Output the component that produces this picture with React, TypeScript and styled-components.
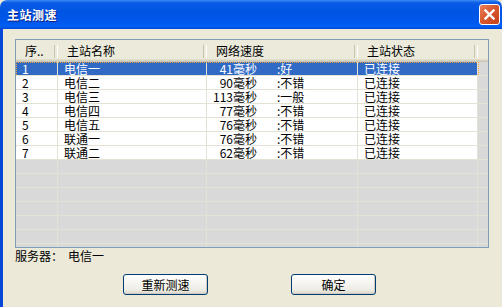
import React from 'react';
import styled, { createGlobalStyle } from 'styled-components';

const GlobalStyle = createGlobalStyle`
    html, body {
        margin: 0;
        padding: 0;
        background: #ece9d8;
    }
    * {
        box-sizing: border-box;
    }
`;

const FONT = `"Noto Sans CJK SC", "Liberation Sans", sans-serif`;
const COLS = '42px 149px 151px 120px 10px';

const Window = styled.div`
    width: 502px;
    height: 307px;
    display: flex;
    flex-direction: column;
    background: #ece9d8;
    font-family: ${FONT};
    font-size: 12px;
    color: #000;
    overflow: hidden;
`;

const TitleBar = styled.div`
    height: 29px;
    flex: none;
    display: flex;
    align-items: center;
    justify-content: space-between;
    padding-left: 7px;
    border-radius: 7px 7px 0 0;
    background: linear-gradient(
        to bottom,
        #3d8cf5 0%,
        #0a5ae6 10%,
        #0054e3 45%,
        #0058ee 80%,
        #0062f5 90%,
        #0048d8 100%
    );
`;

const Title = styled.span`
    color: #fff;
    font-weight: bold;
    font-size: 12px;
    letter-spacing: 0.5px;
    text-shadow: 1px 1px 0 #0a1e80;
`;

const CloseButton = styled.div`
    width: 21px;
    height: 21px;
    margin-right: 2px;
    border: 1px solid #fff;
    border-radius: 3px;
    background: linear-gradient(135deg, #ea7f5a 0%, #d85a30 45%, #c43f18 100%);
    display: flex;
    align-items: center;
    justify-content: center;
`;

const Frame = styled.div`
    flex: 1;
    display: flex;
    border-left: 3px solid #0848d6;
`;

const Body = styled.div`
    flex: 1;
    display: flex;
    flex-direction: column;
    padding: 10px 0 0 12px;
`;

const ListBox = styled.div`
    width: 474px;
    height: 209px;
    border: 1px solid #7f9db9;
    background: #d9d9d9;
    overflow: hidden;
    display: flex;
    flex-direction: column;
`;

const Header = styled.div`
    height: 22px;
    flex: none;
    display: grid;
    grid-template-columns: ${COLS};
    background: linear-gradient(
        to bottom,
        #ebeadb 0,
        #ebeadb 19px,
        #e2decd 19px,
        #e2decd 20px,
        #d6d2c2 20px,
        #d6d2c2 21px,
        #cbc7b8 21px
    );
`;

const HeaderCell = styled.div<{ $sep?: boolean }>`
    position: relative;
    padding-left: 9px;
    line-height: 21px;
    white-space: nowrap;
    &::after {
        content: '';
        display: ${p => (p.$sep ? 'block' : 'none')};
        position: absolute;
        right: 0;
        top: 5px;
        height: 13px;
        width: 2px;
        border-left: 1px solid #c7c5b2;
        border-right: 1px solid #fff;
    }
`;

const Row = styled.div<{ $selected?: boolean }>`
    height: 14px;
    flex: none;
    display: grid;
    grid-template-columns: ${COLS};
    position: relative;
    &::after {
        content: '';
        display: ${p => (p.$selected ? 'block' : 'none')};
        position: absolute;
        left: 0;
        top: 0;
        width: 461px;
        height: 13px;
        border: 1px dotted #f0a53a;
        pointer-events: none;
    }
`;

const Cell = styled.div<{ $kind: 'data' | 'selected' | 'empty' }>`
    height: 14px;
    line-height: 13px;
    padding-left: 6px;
    white-space: nowrap;
    border-bottom: 1px solid #e4e2d4;
    border-right: 1px solid #e4e2d4;
    background: ${p =>
        p.$kind === 'selected' ? '#316ac5' : p.$kind === 'data' ? '#fff' : '#d9d9d9'};
    color: ${p => (p.$kind === 'selected' ? '#fff' : '#000')};
`;

const FillCell = styled.div`
    height: 14px;
    background: #d9d9d9;
    border-bottom: 1px solid #e4e2d4;
`;

const SpeedCell = styled(Cell)`
    padding-left: 0;
    display: flex;
`;

const SpeedNum = styled.span`
    display: inline-block;
    width: 26px;
    text-align: right;
`;

const SpeedUnit = styled.span`
    display: inline-block;
    width: 44px;
`;

const Status = styled.div`
    margin-top: 1px;
    height: 14px;
    line-height: 13px;
`;

const StatusValue = styled.span`
    margin-left: 5px;
`;

const ButtonRow = styled.div`
    display: flex;
    gap: 83px;
    padding-left: 108px;
    margin-top: 11px;
`;

const Button = styled.button`
    width: 85px;
    height: 21px;
    padding: 0;
    border: 1px solid #003c74;
    border-radius: 3px;
    font-family: ${FONT};
    font-size: 12px;
    color: #000;
    background: linear-gradient(to bottom, #ffffff 0%, #f5f4ef 45%, #ecebe4 80%, #d8d3c6 100%);
    box-shadow: inset -1px -1px 0 #d0ccbf;
`;

type Station = { id: number; name: string; ms: number; grade: string; state: string };

const stations: Station[] = [
    { id: 1, name: '电信一', ms: 41, grade: '好', state: '已连接' },
    { id: 2, name: '电信二', ms: 90, grade: '不错', state: '已连接' },
    { id: 3, name: '电信三', ms: 113, grade: '一般', state: '已连接' },
    { id: 4, name: '电信四', ms: 77, grade: '不错', state: '已连接' },
    { id: 5, name: '电信五', ms: 76, grade: '不错', state: '已连接' },
    { id: 6, name: '联通一', ms: 76, grade: '不错', state: '已连接' },
    { id: 7, name: '联通二', ms: 62, grade: '不错', state: '已连接' },
];

const EMPTY_ROWS = 7;

const App = () => {
    return (
        <Window>
            <GlobalStyle />
            <TitleBar>
                <Title>主站测速</Title>
                <CloseButton>
                    <svg width="11" height="11" viewBox="0 0 11 11">
                        <path d="M1.5 1.5 L9.5 9.5 M9.5 1.5 L1.5 9.5" stroke="#fff" strokeWidth="2.4" strokeLinecap="square" />
                    </svg>
                </CloseButton>
            </TitleBar>
            <Frame>
                <Body>
                    <ListBox>
                        <Header>
                            <HeaderCell $sep>序..</HeaderCell>
                            <HeaderCell $sep>主站名称</HeaderCell>
                            <HeaderCell $sep>网络速度</HeaderCell>
                            <HeaderCell $sep>主站状态</HeaderCell>
                            <HeaderCell />
                        </Header>
                        {stations.map((s, i) => {
                            const kind = i === 0 ? 'selected' : 'data';
                            return (
                                <Row key={s.id} $selected={i === 0}>
                                    <Cell $kind={kind}>{s.id}</Cell>
                                    <Cell $kind={kind}>{s.name}</Cell>
                                    <SpeedCell $kind={kind}>
                                        <SpeedNum>{s.ms}</SpeedNum>
                                        <SpeedUnit>毫秒</SpeedUnit>
                                        <span>:{s.grade}</span>
                                    </SpeedCell>
                                    <Cell $kind={kind}>{s.state}</Cell>
                                    <FillCell />
                                </Row>
                            );
                        })}
                        {Array.from({ length: EMPTY_ROWS }).map((_, i) => (
                            <Row key={'e' + i}>
                                <Cell $kind="empty" />
                                <Cell $kind="empty" />
                                <Cell $kind="empty" />
                                <Cell $kind="empty" />
                                <FillCell />
                            </Row>
                        ))}
                    </ListBox>
                    <Status>
                        服务器：<StatusValue>电信一</StatusValue>
                    </Status>
                    <ButtonRow>
                        <Button type="button">重新测速</Button>
                        <Button type="button">确定</Button>
                    </ButtonRow>
                </Body>
            </Frame>
        </Window>
    );
};

export default App;
